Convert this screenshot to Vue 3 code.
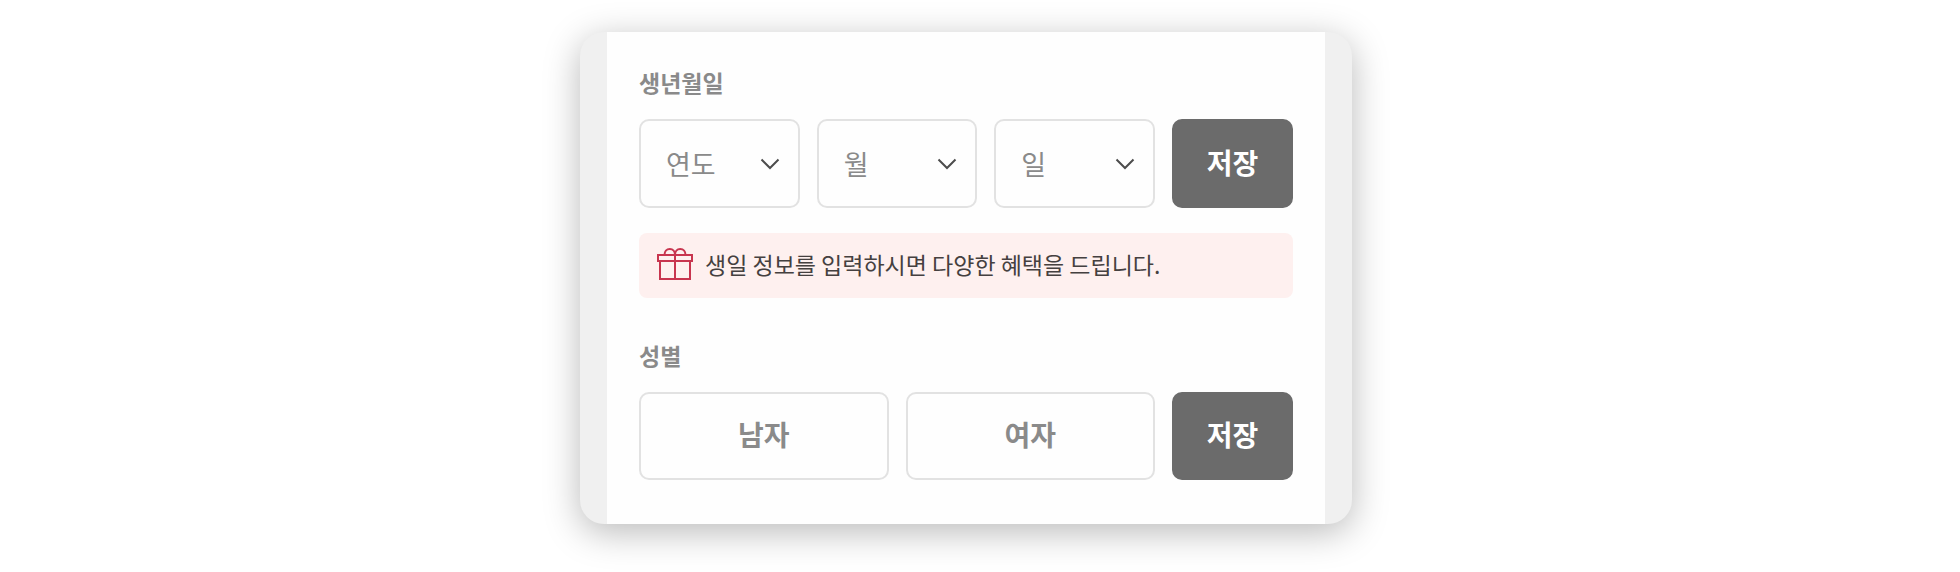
<template>
  <main class="page">
    <section class="card">
      <form class="panel" @submit.prevent>
        <h2 id="birth-title" class="title">생년월일</h2>
        <div class="row birth-row" role="group" aria-labelledby="birth-title">
          <div v-for="field in birthFields" :key="field.key" class="select-box">
            <select v-model="birth[field.key]" :aria-label="field.label">
              <option value="">{{ field.label }}</option>
              <option v-for="n in field.options" :key="n" :value="n">{{ n }}</option>
            </select>
            <svg class="chevron" viewBox="0 0 20 12" width="20" height="12" aria-hidden="true">
              <path d="M1.5 1.5 L10 10 L18.5 1.5" />
            </svg>
          </div>
          <button type="submit" class="save">저장</button>
        </div>

        <p class="notice">
          <svg class="gift" viewBox="0 0 36 32" width="36" height="32" aria-hidden="true">
            <rect x="1" y="7" width="34" height="6" />
            <path d="M3 13 V31 H33 V13" />
            <path d="M18 7 V31" />
            <path d="M7.5 7 C7.5 3.5 9.5 1 12.8 1 C16 1 18 3.5 18 7 C18 3.5 20 1 23.2 1 C26.5 1 28.5 3.5 28.5 7" />
          </svg>
          <span>생일 정보를 입력하시면 다양한 혜택을 드립니다.</span>
        </p>

        <h2 id="gender-title" class="title">성별</h2>
        <div class="row gender-row" role="group" aria-labelledby="gender-title">
          <button
            v-for="item in genders"
            :key="item"
            type="button"
            class="choice"
            :aria-pressed="gender === item"
            @click="gender = item"
          >{{ item }}</button>
          <button type="submit" class="save">저장</button>
        </div>
      </form>
    </section>
  </main>
</template>

<script setup>
import { reactive, ref } from 'vue'

const range = (from, to) => Array.from({ length: to - from + 1 }, (_, i) => from + i)

const birthFields = [
  { key: 'year', label: '연도', options: range(1930, 2024).reverse() },
  { key: 'month', label: '월', options: range(1, 12) },
  { key: 'day', label: '일', options: range(1, 31) }
]

const genders = ['남자', '여자']

const birth = reactive({ year: '', month: '', day: '' })
const gender = ref('')
</script>

<style>
body {
  margin: 0;
  background: #fff;
}
</style>

<style scoped>
.page {
  box-sizing: border-box;
  padding: 32px 28px 48px 0;
  font-family: "Noto Sans CJK KR", "Noto Sans", sans-serif;
}

.card {
  box-sizing: border-box;
  width: 100%;
  max-width: 772px;
  margin: 0 auto;
  padding: 0 27px;
  background: #f0f0f0;
  border-radius: 24px;
  box-shadow: 0 8px 36px rgba(0, 0, 0, 0.28);
}

.panel {
  padding: 34px 32px 44px;
  background: #fefefe;
}

.title {
  margin: 0 0 21px;
  font-size: 23px;
  line-height: 32px;
  font-weight: 700;
  color: #8a8a8a;
}

.row {
  display: grid;
  gap: 17px;
}

.birth-row {
  grid-template-columns: repeat(3, minmax(0, 1fr)) 121px;
  grid-auto-rows: 89px;
}

.gender-row {
  grid-template-columns: repeat(2, minmax(0, 1fr)) 121px;
  grid-auto-rows: 88px;
}

.select-box {
  position: relative;
}

select,
button {
  box-sizing: border-box;
  width: 100%;
  height: 100%;
  margin: 0;
  border: 2px solid #e2e2e2;
  border-radius: 10px;
  background: #fefefe;
  font-family: inherit;
  font-size: 27px;
  color: #8a8a8a;
  cursor: pointer;
}

select {
  appearance: none;
  padding: 0 48px 0 25px;
}

.chevron {
  position: absolute;
  top: 50%;
  right: 20px;
  transform: translateY(-50%);
  fill: none;
  stroke: #4c4c4c;
  stroke-width: 2;
  pointer-events: none;
}

button {
  padding: 0 0 4px;
  font-size: 28px;
  font-weight: 700;
}

.choice[aria-pressed="true"] {
  border-color: #6b6b6b;
}

.save {
  border-color: #6b6b6b;
  background: #6b6b6b;
  color: #fff;
}

.notice {
  display: flex;
  align-items: center;
  gap: 12px;
  box-sizing: border-box;
  min-height: 65px;
  margin: 25px 0 41px;
  padding: 0 18px 4px;
  border-radius: 8px;
  background: #fef0ef;
  font-size: 23px;
  line-height: 32px;
  color: #454040;
}

.gift {
  flex: none;
  fill: none;
  stroke: #c8354f;
  stroke-width: 2;
}
</style>
